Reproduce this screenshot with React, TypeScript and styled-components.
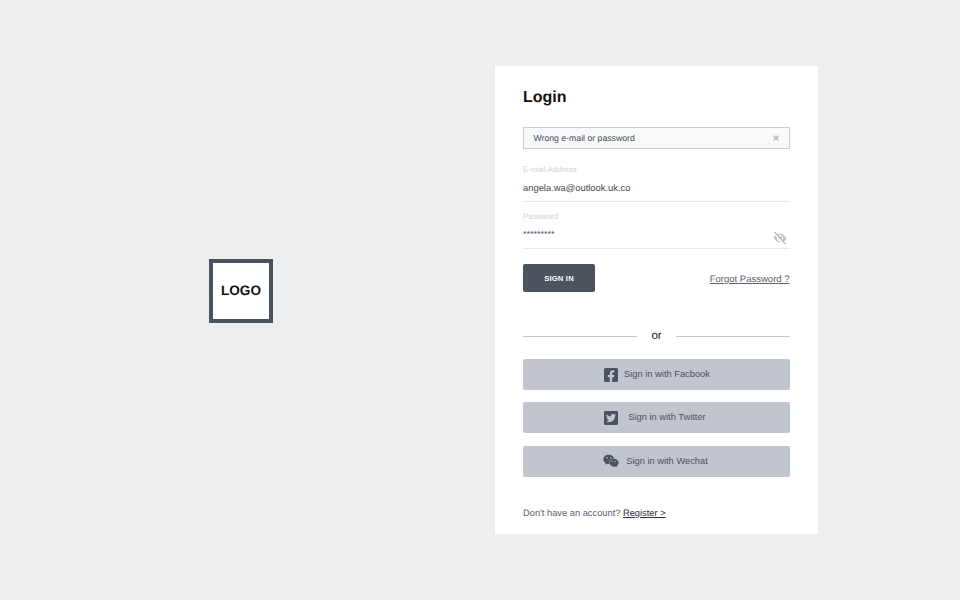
import styled, { createGlobalStyle } from 'styled-components';
import { FaFacebookSquare, FaTwitterSquare, FaWeixin, FaEyeSlash, FaTimes } from 'react-icons/fa';

const GlobalStyle = createGlobalStyle`
  html, body {
    margin: 0;
    padding: 0;
    height: 100%;
    background: #edeef0;
    font-family: "Liberation Sans", Arial, sans-serif;
    text-rendering: geometricPrecision;
  }
`;

const Page = styled.div`
  display: flex;
  align-items: flex-start;
  width: 960px;
  height: 600px;
  padding-top: 66px;
  box-sizing: border-box;
`;

const LogoColumn = styled.div`
  display: flex;
  justify-content: center;
  width: 482px;
  padding-top: 193px;
  margin-right: 13px;
`;

const LogoBox = styled.div`
  display: flex;
  align-items: center;
  justify-content: center;
  width: 64px;
  height: 64px;
  box-sizing: border-box;
  padding-bottom: 2px;
  background: #fff;
  border: 4px solid #4b535e;
  font-size: 13.6px;
  font-weight: 700;
  color: #111;
`;

const Card = styled.div`
  width: 323px;
  height: 468px;
  box-sizing: border-box;
  padding: 22px 28px 0;
  background: #fff;
`;

const Title = styled.h1`
  margin: 0 0 19px;
  font-size: 16px;
  line-height: 20px;
  font-weight: 700;
  color: #111;
`;

const Alert = styled.div`
  display: flex;
  align-items: center;
  justify-content: space-between;
  height: 22px;
  box-sizing: border-box;
  padding: 0 9px 0 9.5px;
  margin-bottom: 16px;
  background: #f8f9fb;
  border: 1px solid #cbced3;
  font-size: 8.7px;
  color: #444a53;
  svg {
    color: #b4b8bf;
    font-size: 8px;
  }
`;

const Field = styled.div`
  position: relative;
  height: 36px;
  margin-bottom: 10px;
  border-bottom: 1px solid #e6e8ea;
`;

const FieldLabel = styled.div`
  font-size: 8px;
  line-height: 10px;
  color: #cfd2d7;
`;

const FieldValue = styled.div`
  margin-top: 6px;
  font-size: 9.4px;
  line-height: 14px;
  color: #444a53;
`;

const PasswordValue = styled(FieldValue)`
  margin-top: 5px;
  font-size: 9px;
  color: #4b535e;
`;

const EyeIcon = styled(FaEyeSlash)`
  position: absolute;
  right: 3px;
  bottom: 3px;
  font-size: 14px;
  color: #bcc0c7;
  transform: rotate(10deg);
`;

const ActionRow = styled.div`
  display: flex;
  align-items: center;
  justify-content: space-between;
  margin-top: 15px;
`;

const SignInButton = styled.button`
  width: 72px;
  height: 28px;
  padding: 0;
  border: none;
  border-radius: 2px;
  background: #4b535e;
  color: #fff;
  font-family: inherit;
  font-size: 7.6px;
  font-weight: 700;
  letter-spacing: 0.2px;
`;

const TextLink = styled.a`
  padding: 3px 0.5px 0 0;
  font-size: 9.5px;
  color: #5a616b;
  text-decoration: underline;
`;

const Divider = styled.div`
  display: flex;
  align-items: center;
  gap: 14px;
  margin: 37px 0 16px;
  font-size: 11.5px;
  line-height: 14px;
  color: #222;
  &::before,
  &::after {
    content: '';
    flex: 1;
    height: 1px;
    background: #c3c7ce;
  }
`;

const SocialList = styled.div`
  display: flex;
  flex-direction: column;
  gap: 12.3px;
`;

const SocialButton = styled.button`
  display: grid;
  grid-template-columns: 16px 92px;
  gap: 2px;
  align-items: center;
  justify-content: start;
  justify-items: center;
  height: 31px;
  padding: 0 0 0 80px;
  border: none;
  border-radius: 2px;
  background: #c1c5cd;
  color: #4b535e;
  font-family: inherit;
  font-size: 9.3px;
  svg {
    font-size: 16px;
    color: #4b535e;
  }
  span {
    margin-bottom: 1px;
  }
`;

const Footer = styled.div`
  margin-top: 31.5px;
  font-size: 9.3px;
  color: #5a616b;
  a {
    color: #2c3038;
    text-decoration: underline;
  }
`;

export default function App() {
  return (
    <>
      <GlobalStyle />
      <Page>
        <LogoColumn>
          <LogoBox>LOGO</LogoBox>
        </LogoColumn>
        <Card>
          <Title>Login</Title>
          <Alert>
            Wrong e-mail or password
            <FaTimes />
          </Alert>
          <Field>
            <FieldLabel>E-mail Address</FieldLabel>
            <FieldValue>angela.wa@outlook.uk.co</FieldValue>
          </Field>
          <Field>
            <FieldLabel>Password</FieldLabel>
            <PasswordValue>*********</PasswordValue>
            <EyeIcon />
          </Field>
          <ActionRow>
            <SignInButton>SIGN IN</SignInButton>
            <TextLink>Forgot Password ?</TextLink>
          </ActionRow>
          <Divider>or</Divider>
          <SocialList>
            <SocialButton><FaFacebookSquare /><span>Sign in with Facbook</span></SocialButton>
            <SocialButton><FaTwitterSquare /><span>Sign in with Twitter</span></SocialButton>
            <SocialButton><FaWeixin /><span>Sign in with Wechat</span></SocialButton>
          </SocialList>
          <Footer>
            Don't have an account? <a>Register &gt;</a>
          </Footer>
        </Card>
      </Page>
    </>
  );
}
